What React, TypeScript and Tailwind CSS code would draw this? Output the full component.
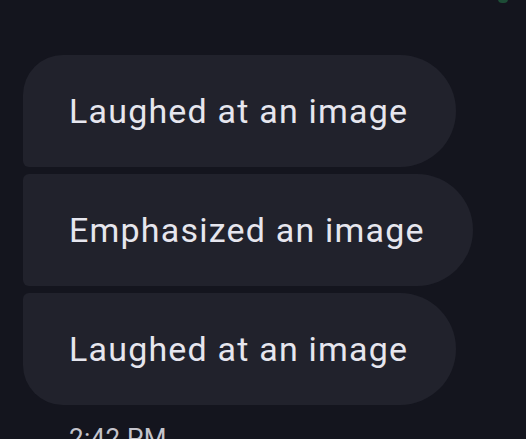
import React from 'react';

interface Bubble {
  text: string;
  corners: string;
}

// right side is a half-circle (112px tall bubbles), left corners vary by position in the group
const bubbles: Bubble[] = [
  { text: 'Laughed at an image', corners: 'rounded-[40px_56px_56px_6px]' },
  { text: 'Emphasized an image', corners: 'rounded-[6px_56px_56px_6px]' },
  { text: 'Laughed at an image', corners: 'rounded-[6px_56px_56px_40px]' },
];

const App: React.FC = () => {
  return (
    <div
      className="relative w-[526px] h-[439px] overflow-hidden bg-[#14151e]"
      style={{ fontFamily: 'Roboto, "Noto Sans", sans-serif' }}
    >
      {/* status dot peeking in at the top */}
      <div className="absolute right-[18px] -top-[5px] w-[10px] h-[8px] rounded-full bg-[#1f5a3c] opacity-80" />

      <div className="flex flex-col items-start gap-[7px] pt-[55px] pl-[23px]">
        {bubbles.map((b, i) => (
          <div
            key={i}
            className={`flex items-center h-[112px] pl-[46px] pr-[48px] bg-[#21222c] ${b.corners}`}
          >
            <span className="text-[34px] leading-none text-[#e6e6ee] tracking-[1.2px]">{b.text}</span>
          </div>
        ))}
        <div className="pl-[46px] pt-[13px] text-[26px] leading-none text-[#c4c4cc] tracking-[0.3px]">2:42 PM</div>
      </div>
    </div>
  );
};

export default App;
